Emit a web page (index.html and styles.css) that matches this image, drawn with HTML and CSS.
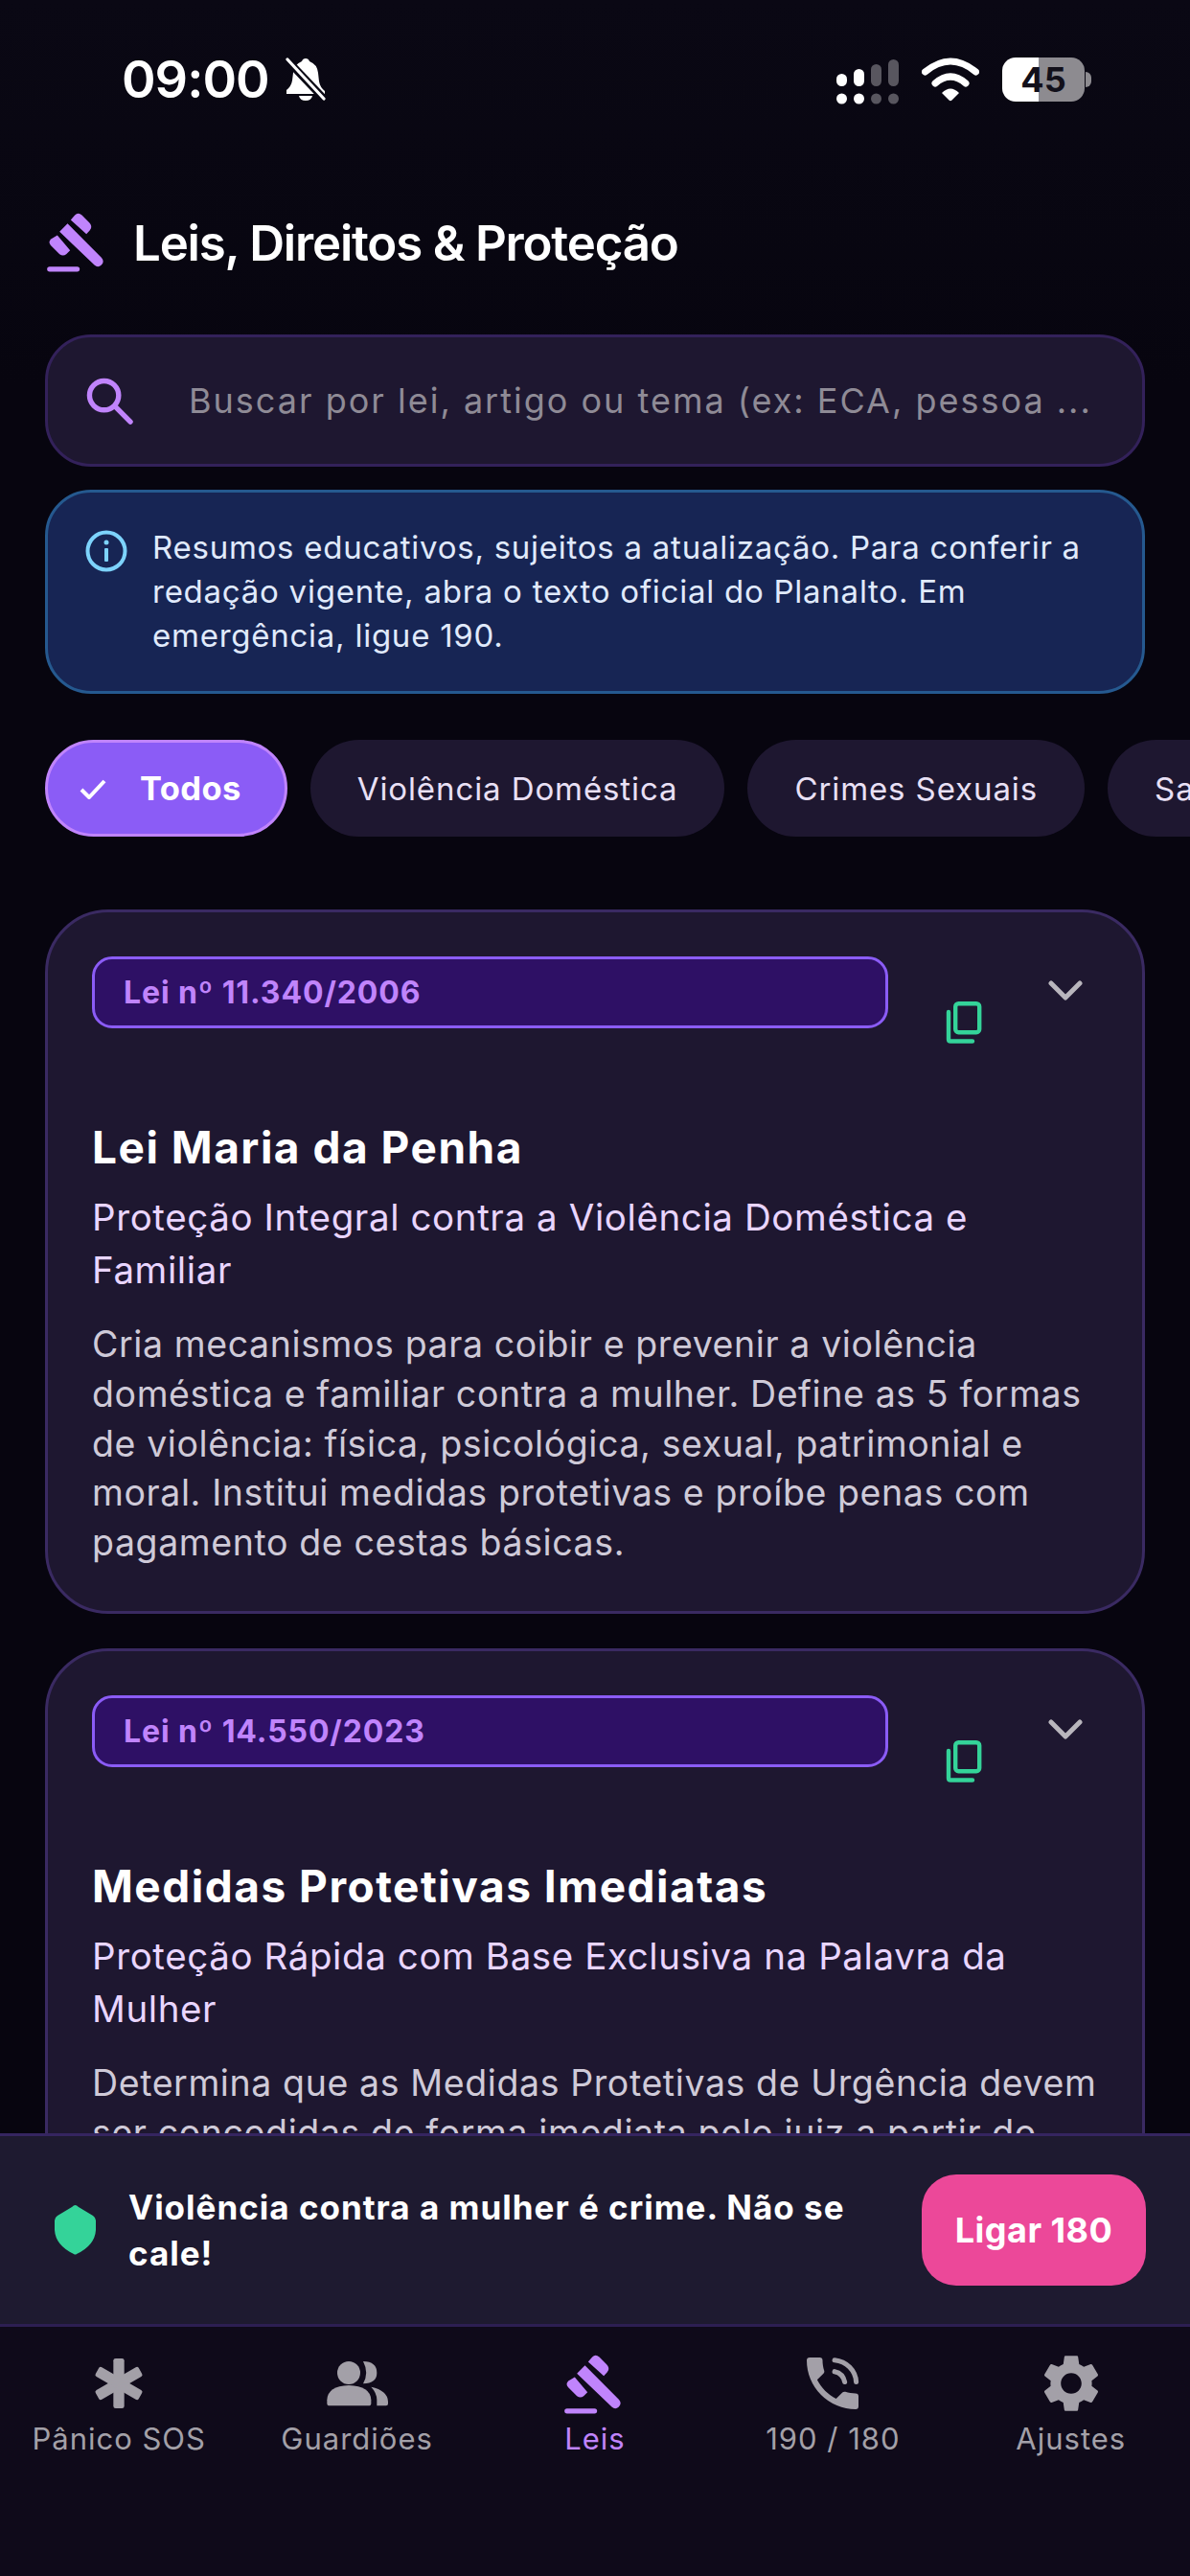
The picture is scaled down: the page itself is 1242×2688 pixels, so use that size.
FILE: index.html
```html
<!DOCTYPE html>
<html lang="pt-BR">
<head>
<meta charset="utf-8">
<title>Leis, Direitos &amp; Proteção</title>
<link rel="stylesheet" href="styles.css">
</head>
<body>
<svg class="defs" width="0" height="0" aria-hidden="true">
  <symbol id="gavel" viewBox="75.5 44.5 216 216">
    <path d="M127 122L152 96L258 203Q269 215 258 226Q247 237 236 226Z"/>
    <path d="M162 85L175 70Q185 60 197 70L220 93Q232 105 222 117L211 129Z"/>
    <path d="M120 133L160 180L148 192Q138 200 127 192L100 165Q90 155 100 145Z"/>
    <rect x="88" y="231" width="102" height="16" rx="8"/>
  </symbol>
  <symbol id="copy" viewBox="0 0 42 44">
    <rect x="11.2" y="2.2" width="25" height="30" rx="3.2" fill="none" stroke="#34d399" stroke-width="4.4"/>
    <path d="M4 11V39.5Q4 41.5 6 41.5H29" fill="none" stroke="#34d399" stroke-width="4.4" stroke-linecap="round"/>
  </symbol>
  <symbol id="chev" viewBox="0 0 36 22">
    <path d="M3 3L18 18L33 3" fill="none" stroke="#b9b6bd" stroke-width="5" stroke-linecap="round" stroke-linejoin="round"/>
  </symbol>
</svg>

<div class="page">
  <header class="status">
    <div class="status-left">
      <span class="time">09:00</span>
      <svg class="bell" viewBox="0 0 42 46">
        <path d="M21 1Q24 1 25 4Q33 7 34 16L35 25Q36 31 41 35L41 38H1L1 34Q6 30 7 24L8 16Q9 7 17 4Q18 1 21 1Z" fill="#fff"/>
        <path d="M14 40H28Q27 45 21 45Q15 45 14 40Z" fill="#fff"/>
        <path d="M1 2L41 44" stroke="#0a0814" stroke-width="8"/>
        <path d="M2 2L40 43" stroke="#fff" stroke-width="3.2" stroke-linecap="round"/>
      </svg>
    </div>
    <div class="status-right">
      <svg class="signal" viewBox="0 0 66 48">
        <rect x="0" y="15" width="11" height="13" rx="5.5" fill="#fff"/>
        <rect x="18" y="10" width="11" height="18" rx="5.5" fill="#fff"/>
        <rect x="36" y="5" width="11" height="23" rx="5.5" fill="#58565f"/>
        <rect x="54" y="0" width="11" height="28" rx="5.5" fill="#58565f"/>
        <circle cx="5.5" cy="41" r="5.5" fill="#fff"/>
        <circle cx="23.5" cy="41" r="5.5" fill="#fff"/>
        <circle cx="41.5" cy="41" r="5.5" fill="#58565f"/>
        <circle cx="59.5" cy="41" r="5.5" fill="#58565f"/>
      </svg>
      <svg class="wifi" viewBox="0 0 60 46">
        <path d="M3.5 15Q30 -7 56.500 15" fill="none" stroke="#fff" stroke-width="7" stroke-linecap="round"/>
        <path d="M14 27Q30 13 46 27" fill="none" stroke="#fff" stroke-width="7" stroke-linecap="round"/>
        <path d="M21 37Q30 28 39 37L31.500 44.500Q30 46 28.500 44.500Z" fill="#fff"/>
      </svg>
      <div class="battery">
        <div class="battery-body"><span>45</span></div>
        <div class="battery-tip"></div>
      </div>
    </div>
  </header>

  <section class="top">
    <div class="heading">
      <svg class="gavel-icon"><use href="#gavel"/></svg>
      <h1>Leis, Direitos &amp; Proteção</h1>
    </div>

    <div class="search">
      <svg class="search-icon" viewBox="0 0 50 50">
        <circle cx="19" cy="19" r="15.500" fill="none" stroke="#c084fc" stroke-width="5.500"/>
        <path d="M31 31L47 47" stroke="#c084fc" stroke-width="5.500" stroke-linecap="round"/>
      </svg>
      <span class="placeholder">Buscar por lei, artigo ou tema (ex: ECA, pessoa ...</span>
    </div>

    <div class="notice">
      <svg class="info-icon" viewBox="0 0 44 44">
        <circle cx="22" cy="22" r="19.500" fill="none" stroke="#7dd3fc" stroke-width="4"/>
        <rect x="20" y="19" width="4" height="14" rx="1" fill="#7dd3fc"/>
        <circle cx="22" cy="13" r="2.500" fill="#7dd3fc"/>
      </svg>
      <p>Resumos educativos, sujeitos a atualização. Para conferir a redação vigente, abra o texto oficial do Planalto. Em emergência, ligue 190.</p>
    </div>

    <div class="chips">
      <div class="chip chip-active">
        <svg class="check" viewBox="0 0 28 22"><path d="M2 12L10 20L26 3" fill="none" stroke="#fff" stroke-width="4"/></svg>
        <span>Todos</span>
      </div>
      <div class="chip">Violência Doméstica</div>
      <div class="chip">Crimes Sexuais</div>
      <div class="chip">Saúde da Mulher</div>
    </div>
  </section>

  <main class="laws">
    <article class="card">
      <div class="card-head">
        <div class="badge">Lei nº 11.340/2006</div>
        <svg class="copy-icon"><use href="#copy"/></svg>
        <svg class="chev-icon"><use href="#chev"/></svg>
      </div>
      <h2>Lei Maria da Penha</h2>
      <h3>Proteção Integral contra a Violência Doméstica e Familiar</h3>
      <p>Cria mecanismos para coibir e prevenir a violência doméstica e familiar contra a mulher. Define as 5 formas de violência: física, psicológica, sexual, patrimonial e moral. Institui medidas protetivas e proíbe penas com pagamento de cestas básicas.</p>
    </article>
    <article class="card">
      <div class="card-head">
        <div class="badge">Lei nº 14.550/2023</div>
        <svg class="copy-icon"><use href="#copy"/></svg>
        <svg class="chev-icon"><use href="#chev"/></svg>
      </div>
      <h2>Medidas Protetivas Imediatas</h2>
      <h3>Proteção Rápida com Base Exclusiva na Palavra da Mulher</h3>
      <p>Determina que as Medidas Protetivas de Urgência devem ser concedidas de forma imediata pelo juiz a partir do depoimento da ofendida, sem exigir boletim de ocorrência.</p>
    </article>
  </main>

  <aside class="banner">
    <svg class="shield" viewBox="0 0 43 52"><path d="M21.500 0Q23 0 25 2L40 11Q43 13 43 16V26Q42 42 23 51Q21.500 52 20 51Q1 42 0 26V16Q0 13 3 11L18 2Q20 0 21.500 0Z" fill="#34d399"/></svg>
    <strong class="banner-text">Violência contra a mulher é crime. Não se cale!</strong>
    <div class="call">Ligar 180</div>
  </aside>

  <nav class="tabs">
    <div class="tab">
      <svg class="tab-icon" viewBox="204 90 216 216">
        <g fill="#a3a0a8">
          <rect x="295" y="120" width="34" height="156" rx="7"/>
          <rect x="295" y="120" width="34" height="156" rx="7" transform="rotate(60 312 198)"/>
          <rect x="295" y="120" width="34" height="156" rx="7" transform="rotate(-60 312 198)"/>
        </g>
      </svg>
      <span>Pânico SOS</span>
    </div>
    <div class="tab">
      <svg class="tab-icon" viewBox="949 90 216 216">
        <g fill="#a3a0a8">
          <circle cx="1030" cy="165" r="36"/>
          <path d="M962 260V250Q964 206 1030 204Q1098 206 1100 250V260Q1100 268 1092 268H970Q962 268 962 260Z"/>
          <path d="M1075 129Q1118 130 1118 165Q1118 198 1075 199Q1094 165 1075 129Z"/>
          <path d="M1100 209Q1152 220 1153 255V262Q1153 268 1147 268H1118V250Q1118 228 1100 209Z"/>
        </g>
      </svg>
      <span>Guardiões</span>
    </div>
    <div class="tab tab-active">
      <svg class="tab-icon gavel-tab"><use href="#gavel"/></svg>
      <span>Leis</span>
    </div>
    <div class="tab">
      <svg class="tab-icon" viewBox="0 0 24 24">
        <path fill="#a3a0a8" d="M20 15.500C18.750 15.500 17.550 15.300 16.430 14.930C16.080 14.820 15.690 14.900 15.410 15.170L13.210 17.370C10.380 15.930 8.060 13.620 6.620 10.780L8.820 8.570C9.100 8.310 9.180 7.920 9.070 7.570C8.700 6.450 8.500 5.250 8.500 4A1 1 0 0 0 7.500 3H4A1 1 0 0 0 3 4A17 17 0 0 0 20 21A1 1 0 0 0 21 20V16.500A1 1 0 0 0 20 15.500Z"/>
        <path fill="none" stroke="#a3a0a8" stroke-width="1.700" stroke-linecap="round" d="M12.700 3.900C16.800 4.300 20 7.500 20.200 11.500"/>
        <path fill="none" stroke="#a3a0a8" stroke-width="1.700" stroke-linecap="round" d="M12.700 7.900C14.600 8.300 15.800 9.500 16.200 11.500"/>
      </svg>
      <span>190 / 180</span>
    </div>
    <div class="tab">
      <svg class="tab-icon" viewBox="0 0 24 24">
        <path fill="#a3a0a8" d="M19.140 12.940c.04-.3.06-.61.06-.94 0-.32-.02-.64-.07-.94l2.030-1.580c.18-.14.23-.41.12-.61l-1.920-3.320c-.12-.22-.37-.29-.59-.22l-2.390.96c-.5-.38-1.030-.7-1.620-.94L14.400 2.810c-.04-.24-.24-.41-.48-.41h-3.840c-.24 0-.43.17-.47.41L9.250 5.350C8.660 5.590 8.120 5.920 7.630 6.290L5.240 5.330c-.22-.08-.47 0-.59.22L2.740 8.870C2.620 9.080 2.660 9.340 2.860 9.480l2.030 1.580C4.840 11.360 4.800 11.690 4.800 12s.02.64.07.94l-2.030 1.580c-.18.14-.23.41-.12.61l1.920 3.320c.12.22.37.29.59.22l2.390-.96c.5.38 1.030.7 1.620.94l.36 2.540c.05.24.24.41.48.41h3.840c.24 0 .44-.17.47-.41l.36-2.540c.59-.24 1.130-.56 1.620-.94l2.390.96c.22.08.47 0 .59-.22l1.920-3.320c.12-.22.07-.47-.12-.61L19.140 12.940zM12 15.600c-1.980 0-3.600-1.620-3.600-3.600s1.620-3.600 3.600-3.600 3.600 1.620 3.600 3.600-1.620 3.600-3.600 3.600z"/>
      </svg>
      <span>Ajustes</span>
    </div>
  </nav>
</div>
</body>
</html>
```
FILE: styles.css
```css
* { box-sizing: border-box; margin: 0; padding: 0; }
html, body { background: #07050f; }
body { font-family: Inter, "Noto Sans", sans-serif; color: #fff; }
.defs { position: absolute; }

.page {
  width: 1242px;
  height: 2688px;
  display: flex;
  flex-direction: column;
  overflow: hidden;
  background: linear-gradient(#0a0814, #07050f 400px);
}

/* status bar */
.status {
  flex: 0 0 166px;
  display: flex;
  align-items: center;
  justify-content: space-between;
  padding: 0 103px 0 127px;
}
.status-left { display: flex; align-items: center; gap: 17px; }
.time { font-size: 54px; font-weight: 600; letter-spacing: -1px; line-height: 60px; }
.bell { width: 42px; height: 46px; }
.status-right { display: flex; align-items: center; }
.signal { width: 66px; height: 48px; margin-top: 6px; margin-right: 23px; }
.wifi { width: 60px; height: 46px; margin-right: 24px; }
.battery { display: flex; align-items: center; gap: 1px; }
.battery-body {
  width: 86px;
  height: 46px;
  border-radius: 14px;
  background: linear-gradient(90deg, #fff 44%, #8d8b90 44%);
  display: flex;
  align-items: center;
  justify-content: center;
  color: #12101a;
  font-size: 36px;
  font-weight: 700;
  line-height: 46px;
}
.battery-tip { width: 6px; height: 16px; border-radius: 0 8px 8px 0; background: #8d8b90; }

/* heading and filters */
.top { flex: 0 0 auto; padding-bottom: 76px; }
.heading {
  height: 172px;
  margin-bottom: 11px;
  display: flex;
  align-items: center;
  gap: 22px;
  padding-left: 45px;
}
.gavel-icon { width: 72px; height: 72px; fill: #c084fc; }
h1 { font-size: 51px; font-weight: 600; letter-spacing: -1.2px; line-height: 60px; margin-top: 4px; }

.search {
  height: 138px;
  margin: 0 47px;
  display: flex;
  align-items: center;
  gap: 58px;
  padding-left: 40px;
  background: #1e1730;
  border: 3px solid #33215a;
  border-radius: 48px;
}
.search-icon { width: 49px; height: 49px; flex: none; }
.placeholder { font-size: 36px; letter-spacing: 2px; color: #8f8b96; white-space: nowrap; }

.notice {
  height: 213px;
  margin: 24px 47px 0;
  display: flex;
  gap: 26px;
  padding: 39px 30px 0 39px;
  background: #172554;
  border: 3px solid #25598f;
  border-radius: 48px;
}
.info-icon { width: 44px; height: 44px; flex: none; }
.notice p { font-size: 33px; line-height: 46px; letter-spacing: 0.75px; color: #e0eafc; margin-top: -5px; }

.chips { display: flex; gap: 24px; margin-top: 48px; padding-left: 47px; overflow: hidden; }
.chip {
  flex: none;
  height: 101px;
  display: flex;
  align-items: center;
  padding: 0 49px;
  border-radius: 51px;
  background: #1e1730;
  color: #e9e0f5;
  font-size: 33px;
  letter-spacing: 0.9px;
  white-space: nowrap;
}
.chip-active {
  gap: 35px;
  padding: 0 45px 0 33px;
  background: #8b5cf6;
  border: 3px solid #c084fc;
  color: #fff;
  font-size: 34.500px;
  font-weight: 700;
  letter-spacing: 0.4px;
}
.check { width: 28px; height: 22px; }

/* law cards */
.laws {
  flex: 1 1 0;
  min-height: 0;
  overflow: hidden;
  padding: 0 47px;
  display: flex;
  flex-direction: column;
  gap: 36px;
}
.card {
  flex: none;
  padding: 46px 46px 45px;
  background: #1e1730;
  border: 3px solid #3a2a62;
  border-radius: 66px;
}
.card-head { display: flex; align-items: flex-start; height: 169px; }
.badge {
  width: 831px;
  height: 75px;
  display: flex;
  align-items: center;
  padding-left: 30px;
  background: #2e1065;
  border: 3px solid #8b5cf6;
  border-radius: 21px;
  color: #c084fc;
  font-size: 32px;
  font-weight: 700;
  letter-spacing: 0.9px;
}
.copy-icon { width: 42px; height: 44px; margin: 47px 0 0 59px; flex: none; }
.chev-icon { width: 36px; height: 22px; margin: 25px 0 0 66px; flex: none; }
.card h2 { font-size: 46px; font-weight: 700; letter-spacing: 1.5px; line-height: 60px; }
.card h3 { margin-top: 16px; font-size: 38.500px; font-weight: 400; letter-spacing: 0.6px; line-height: 55px; color: #e9d5ff; }
.card p { margin-top: 24px; font-size: 37.500px; letter-spacing: 0.6px; line-height: 51.800px; color: #cfcad8; }

/* bottom banner */
.banner {
  flex: 0 0 202px;
  display: flex;
  align-items: center;
  padding: 0 46px 0 57px;
  background: #1e1a30;
  border-top: 3px solid #352560;
  border-bottom: 3px solid #2d1f52;
}
.shield { width: 43px; height: 52px; flex: none; }
.banner-text {
  flex: 1;
  margin: 0 60px 0 34px;
  font-size: 35px;
  font-weight: 700;
  letter-spacing: 1px;
  line-height: 48px;
}
.call {
  flex: none;
  width: 234px;
  height: 116px;
  display: flex;
  align-items: center;
  justify-content: center;
  background: #ec4899;
  border-radius: 36px;
  font-size: 36px;
  font-weight: 700;
  letter-spacing: 0.5px;
}

/* tab bar */
.tabs {
  flex: 0 0 260px;
  display: grid;
  grid-template-columns: repeat(5, 1fr);
  align-content: start;
  padding-top: 23px;
  background: #0f0a1a;
}
.tab { display: flex; flex-direction: column; align-items: center; color: #a3a0a8; }
.tab span { margin-top: 2px; font-size: 31px; letter-spacing: 1px; line-height: 40px; }
.tab-icon { width: 72px; height: 72px; }
.gavel-tab { fill: #c084fc; }
.tab-active { color: #c084fc; }
```
